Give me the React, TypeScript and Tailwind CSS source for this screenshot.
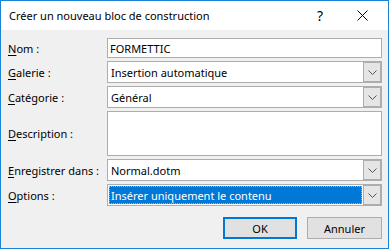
import React from 'react';

const font = { fontFamily: '"Segoe UI", "Noto Sans", "Open Sans", sans-serif' };

function Label({ access, rest }: { access: string; rest: string }) {
  return (
    <span className="w-[99px] shrink-0 whitespace-nowrap text-[11px] leading-[15px] text-black">
      <span className="underline underline-offset-2">{access}</span>
      {rest}
    </span>
  );
}

function Chevron() {
  return (
    <svg width="9" height="5" viewBox="0 0 9 5" className="block">
      <path d="M0.5 0.5 L4.5 4.5 L8.5 0.5" fill="none" stroke="#555" strokeWidth="1" />
    </svg>
  );
}

function Combo({ value, selected }: { value: string; selected?: boolean }) {
  return (
    <div className="flex h-[22px] flex-1 border border-[#adadad] bg-white">
      <div className="flex flex-1 items-center px-px">
        {selected ? (
          <div className="flex h-[18px] flex-1 items-center border border-dotted border-[#f0a040] bg-[#0078d7] pl-[1px] text-[11px] leading-[15px] text-white">
            {value}
          </div>
        ) : (
          <span className="pl-[2px] text-[11px] leading-[15px] text-black">{value}</span>
        )}
      </div>
      <div className="flex w-[18px] items-center justify-center border border-[#adadad] bg-[#e5e5e5]">
        <Chevron />
      </div>
    </div>
  );
}

function Row({ children }: { children: React.ReactNode }) {
  return <div className="flex items-center">{children}</div>;
}

export default function App() {
  return (
    <div
      style={font}
      className="flex h-[249px] w-[389px] flex-col border border-[#1883d7] bg-[#f0f0f0]"
    >
      {/* title bar */}
      <div className="flex h-[29px] shrink-0 items-center bg-white pl-[8px]">
        <span className="flex-1 text-[11px] leading-[15px] text-black">Créer un nouveau bloc de construction</span>
        <span className="mr-[34px] text-[14px] leading-none text-black">?</span>
        <svg width="11" height="11" viewBox="0 0 11 11" className="mr-[20px]">
          <path d="M0.5 0.5 L10.5 10.5 M10.5 0.5 L0.5 10.5" stroke="#000" strokeWidth="1" />
        </svg>
      </div>

      {/* form */}
      <div className="flex flex-col gap-[3px] pl-[7px] pr-[6px] pt-[8px]">
        <Row>
          <Label access="N" rest="om :" />
          <div className="flex h-[20px] flex-1 items-center border border-[#adadad] bg-white pl-[2px] text-[11px] leading-[15px] text-black">
            FORMETTIC
          </div>
        </Row>
        <Row>
          <Label access="G" rest="alerie :" />
          <Combo value="Insertion automatique" />
        </Row>
        <Row>
          <Label access="C" rest="atégorie :" />
          <Combo value="Général" />
        </Row>
        <Row>
          <Label access="D" rest="escription :" />
          <div className="h-[45px] flex-1 border border-[#adadad] bg-white" />
        </Row>
        <Row>
          <Label access="E" rest="nregistrer dans :" />
          <Combo value="Normal.dotm" />
        </Row>
        <Row>
          <Label access="O" rest="ptions :" />
          <Combo value="Insérer uniquement le contenu" selected />
        </Row>
      </div>

      {/* buttons */}
      <div className="mt-[11px] flex justify-end gap-[10px] pr-[6px]">
        <button className="flex h-[22px] w-[74px] items-center justify-center border-2 border-[#0078d7] bg-[#e1e1e1] text-[11px] leading-[15px] text-black">
          OK
        </button>
        <button className="flex h-[22px] w-[75px] items-center justify-center border border-[#adadad] bg-[#e1e1e1] text-[11px] leading-[15px] text-black">
          Annuler
        </button>
      </div>
    </div>
  );
}
